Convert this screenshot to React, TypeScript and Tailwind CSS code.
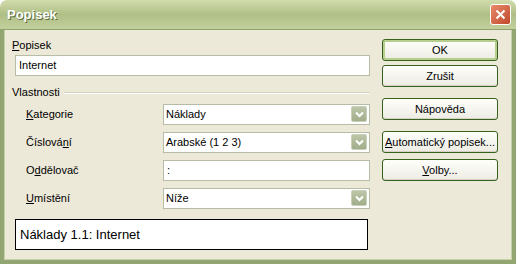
import React from 'react';

const font = { fontFamily: '"Liberation Sans", Arial, sans-serif' };

const Chevron = () => (
  <div className="w-[16px] h-[16px] rounded-[2px] bg-gradient-to-b from-[#bcc6a8] to-[#a2ad8b] border border-[#c9d0b8] flex items-center justify-center">
    <svg width="9" height="7" viewBox="0 0 9 7">
      <path d="M1 1.5 L4.5 5 L8 1.5" fill="none" stroke="#ffffff" strokeWidth="2" />
    </svg>
  </div>
);

const Select = ({ value }: { value: string }) => (
  <div className="w-[207px] h-[21px] bg-white border border-[#b7bca6] flex items-center justify-between pl-[2px] pr-[2px] text-[11px] text-black">
    <span>{value}</span>
    <Chevron />
  </div>
);

const Button = ({ children, primary }: { children: React.ReactNode; primary?: boolean }) => (
  <div
    className={`w-[116px] h-[22px] rounded-[3px] border border-[#37621e] bg-gradient-to-b from-[#fffffb] to-[#ecebe3] flex items-center justify-center text-[11px] text-black ${
      primary ? 'shadow-[inset_0_0_0_2px_#b7cf8c]' : 'shadow-[inset_0_-1px_0_#d6d0c5]'
    }`}
  >
    {children}
  </div>
);

const rows = [
  { label: <><u>K</u>ategorie</>, value: 'Náklady', select: true },
  { label: <>Číslová<u>n</u>í</>, value: 'Arabské (1 2 3)', select: true },
  { label: <>O<u>d</u>dělovač</>, value: ':', select: false },
  { label: <><u>U</u>místění</>, value: 'Níže', select: true },
];

const App = () => {
  return (
    <div className="w-[516px] h-[264px] flex flex-col bg-white" style={font}>
      <div className="h-[30px] rounded-t-[7px] bg-gradient-to-b from-[#d2dcac] via-[#afbf86] to-[#c3d09d] border-b border-[#8ea36b] flex items-center justify-between pl-[7px] pr-[5px]">
        <span className="text-white font-bold text-[13px] [text-shadow:1px_1px_0_#5a6b3c]">Popisek</span>
        <div className="w-[21px] h-[21px] rounded-[3px] border border-white bg-gradient-to-br from-[#e88a6c] to-[#c0472a] flex items-center justify-center">
          <svg width="11" height="11" viewBox="0 0 11 11">
            <path d="M1.5 1.5 L9.5 9.5 M9.5 1.5 L1.5 9.5" stroke="#ffffff" strokeWidth="2" />
          </svg>
        </div>
      </div>
      <div className="flex-1 flex bg-[#ece9d8] border-l-4 border-r-4 border-b-4 border-[#91a670] shadow-[inset_1px_0_0_#c6d1aa,inset_-1px_0_0_#c6d1aa,inset_0_-1px_0_#c6d1aa]">
        <div className="w-[366px] pl-[8px] flex flex-col text-[11px] text-black">
          <div className="mt-[9px] h-[13px] leading-[13px]"><u>P</u>opisek</div>
          <div className="mt-[3px] ml-[3px] w-[355px] h-[21px] bg-white border border-[#b7bca6] flex items-center pl-[3px]">Internet</div>
          <div className="mt-[10px] h-[13px] leading-[13px] flex items-center w-[358px]">
            <span>Vlastnosti</span>
            <div className="flex-1 ml-[4px] border-t border-[#d0d0bf] border-b border-b-white" />
          </div>
          <div className="mt-[4px] flex flex-col gap-[6px]">
            {rows.map((r, i) => (
              <div key={i} className="flex items-center h-[22px]">
                <div className="w-[151px] pl-[14px]">{r.label}</div>
                {r.select ? (
                  <Select value={r.value} />
                ) : (
                  <div className="w-[207px] h-[21px] bg-white border border-[#b7bca6] flex items-center pl-[3px]">{r.value}</div>
                )}
              </div>
            ))}
          </div>
          <div className="mt-[10px] ml-[3px] w-[353px] h-[31px] bg-white border border-black flex items-center pl-[4px] text-[13px]">
            Náklady 1.1: Internet
          </div>
        </div>
        <div className="pl-[12px] flex flex-col">
          <div className="mt-[9px]"><Button primary>OK</Button></div>
          <div className="mt-[4px]"><Button>Zrušit</Button></div>
          <div className="mt-[11px]"><Button>Nápověda</Button></div>
          <div className="mt-[11px]"><Button><span><u>A</u>utomatický popisek...</span></Button></div>
          <div className="mt-[6px]"><Button><span><u>V</u>olby...</span></Button></div>
        </div>
      </div>
    </div>
  );
};

export default App;
